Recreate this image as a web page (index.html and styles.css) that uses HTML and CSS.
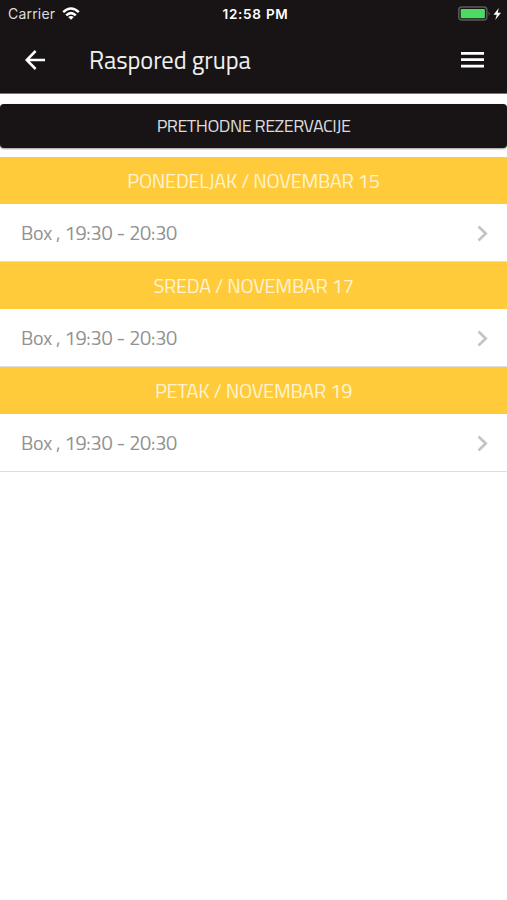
FILE: index.html
```html
<!DOCTYPE html>
<html lang="sr-Latn">
<head>
<meta charset="utf-8">
<title>Raspored grupa</title>
<link rel="stylesheet" href="styles.css">
</head>
<body>
<header class="header">
  <div class="status">
    <div class="carrier"><span>Carrier</span>
      <svg class="wifi" width="18" height="14" viewBox="0 0 18 14" fill="none" stroke="#fff" stroke-width="2.5"><path d="M1.2 5.1Q9-2 16.8 5.1M4.2 8.3Q9 3.9 13.8 8.3"/><path d="M9 12.8 6.2 10Q9 7.8 11.8 10Z" fill="#fff" stroke="none"/></svg>
    </div>
    <span class="clock">12:58 PM</span>
    <div class="power">
      <svg width="44" height="16" viewBox="0 0 44 16"><rect x=".8" y="1.1" width="28" height="13" rx="3" fill="none" stroke="#5c595b" stroke-width="1.5"/><rect x="2.7" y="3" width="24.2" height="9.2" rx="1" fill="#4cd964"/><path d="M30.5 5.5Q33 7.6 30.5 9.7Z" fill="#5c595b"/><path d="M40.8 2 35.5 8.8H38.8L37.2 14 43 6.8H39.7Z" fill="#fff"/></svg>
    </div>
  </div>
  <div class="toolbar">
    <svg class="back" width="20" height="20" viewBox="0 0 20 20" fill="none" stroke="#fff" stroke-width="2.5"><path d="M20 10H2M10.6 1 1.7 10 10.6 19"/></svg>
    <h1 class="title">Raspored grupa</h1>
    <svg class="menu" width="23" height="16" viewBox="0 0 23 16" fill="#fff"><path d="M0 0H23V2.7H0ZM0 6.3H23V9H0ZM0 12.7H23V15.4H0Z"/></svg>
  </div>
</header>
<main>
  <button class="previous">PRETHODNE REZERVACIJE</button>
  <section class="day">
    <h2 class="date">PONEDELJAK / NOVEMBAR 15</h2>
    <div class="item"><span>Box , 19:30 - 20:30</span><svg class="chevron" width="11" height="17" viewBox="0 0 11 17"><path d="M1.5 1.5 8.7 8.5 1.5 15.5"/></svg></div>
  </section>
  <section class="day">
    <h2 class="date">SREDA / NOVEMBAR 17</h2>
    <div class="item"><span>Box , 19:30 - 20:30</span><svg class="chevron" width="11" height="17" viewBox="0 0 11 17"><path d="M1.5 1.5 8.7 8.5 1.5 15.5"/></svg></div>
  </section>
  <section class="day">
    <h2 class="date">PETAK / NOVEMBAR 19</h2>
    <div class="item"><span>Box , 19:30 - 20:30</span><svg class="chevron" width="11" height="17" viewBox="0 0 11 17"><path d="M1.5 1.5 8.7 8.5 1.5 15.5"/></svg></div>
  </section>
</main>
</body>
</html>
```
FILE: styles.css
```css
* { box-sizing: border-box; }
body {
  margin: 0;
  background: #fff;
  font-family: "Titillium Web", Roboto, "Open Sans", sans-serif;
}
.header {
  height: 94px;
  background: #181415;
  border-bottom: 1px solid #777475;
  color: #fff;
}
.status {
  display: grid;
  grid-template-columns: 1fr auto 1fr;
  align-items: center;
  height: 27px;
  padding: 0 5px 0 8px;
  font-family: Inter, "Liberation Sans", sans-serif;
  font-size: 14px;
}
.carrier { display: flex; align-items: center; gap: 7px; color: #dedddd; letter-spacing: .2px; }
.clock {
  margin-left: 1px;
  font-size: 13.5px;
  font-weight: 600;
  letter-spacing: .75px;
}
.power { display: flex; justify-content: flex-end; }
.toolbar {
  display: flex;
  align-items: center;
  height: 66px;
  padding: 0 23px 0 25px;
}
.title {
  flex: 1;
  margin: 0 0 0 44px;
  color: #f0efef;
  font-size: 24.5px;
  font-weight: 400;
  letter-spacing: -.08px;
  line-height: 32px;
}
.previous {
  display: block;
  width: 100%;
  height: 44px;
  margin: 9.5px 0 9.5px;
  padding: 0;
  border: 0;
  border-radius: 4px;
  background: #181415;
  box-shadow: 0 1px 2px #0006;
  color: #dcdbdb;
  font: 400 18px/44px "Titillium Web", Roboto, sans-serif;
  letter-spacing: -.5px;
}
.day { border-bottom: 1px solid #dedede; }
.date {
  height: 47px;
  margin: 0;
  background: #ffcb3b;
  color: #fff4d2;
  font-size: 20px;
  font-weight: 400;
  letter-spacing: -.25px;
  line-height: 48px;
  text-align: center;
}
.item {
  display: flex;
  align-items: center;
  justify-content: space-between;
  height: 57px;
  padding: 1px 19px 0 21px;
  color: #929292;
  font-size: 20px;
  font-weight: 400;
  letter-spacing: -.25px;
}
.item span { margin-top: -2px; }
.chevron { fill: none; stroke: #c4c4c4; stroke-width: 2.7; }
```
